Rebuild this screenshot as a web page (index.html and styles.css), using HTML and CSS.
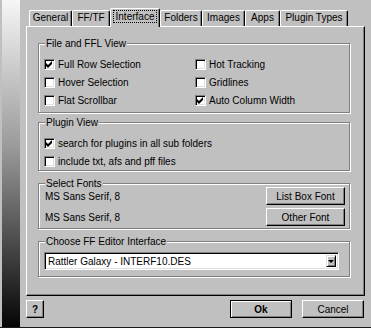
FILE: index.html
```html
<!DOCTYPE html>
<html lang="en">
  <head>
    <meta charset="UTF-8" />
    <title>Options - Interface</title>
    <link rel="stylesheet" href="styles.css">
  </head>
  <body>
    <div class="dialog">
      <div class="strip"></div>
      <div class="main">
        <!-- tab strip -->
        <div class="tabs">
          <div class="tab t-general">General</div>
          <div class="tab t-fftf">FF/TF</div>
          <div class="tab active t-interface"><span class="focus">Interface</span></div>
          <div class="tab t-folders">Folders</div>
          <div class="tab t-images">Images</div>
          <div class="tab t-apps">Apps</div>
          <div class="tab t-plugins">Plugin Types</div>
        </div>

        <div class="panel">
          <!-- File and FFL View -->
          <fieldset class="group g-view">
            <legend>File and FFL View</legend>
            <div class="checks two-col">
              <label class="check"><span class="box"><svg viewBox="0 0 7 7"><polygon points="0,2 2,4 6,0 6,3 2,7 0,5" /></svg></span>Full Row Selection</label>
              <label class="check"><span class="box"></span>Hot Tracking</label>
              <label class="check"><span class="box"></span>Hover Selection</label>
              <label class="check"><span class="box"></span>Gridlines</label>
              <label class="check"><span class="box"></span>Flat Scrollbar</label>
              <label class="check"><span class="box"><svg viewBox="0 0 7 7"><polygon points="0,2 2,4 6,0 6,3 2,7 0,5" /></svg></span>Auto Column Width</label>
            </div>
          </fieldset>

          <!-- Plugin View -->
          <fieldset class="group g-plugin">
            <legend>Plugin View</legend>
            <div class="checks">
              <label class="check"><span class="box"><svg viewBox="0 0 7 7"><polygon points="0,2 2,4 6,0 6,3 2,7 0,5" /></svg></span>search for plugins in all sub folders</label>
              <label class="check"><span class="box"></span>include txt, afs and pff files</label>
            </div>
          </fieldset>

          <!-- Select Fonts -->
          <fieldset class="group g-fonts">
            <legend>Select Fonts</legend>
            <div class="font-row">
              <span>MS Sans Serif, 8</span>
              <button class="btn font-btn">List Box Font</button>
            </div>
            <div class="font-row">
              <span>MS Sans Serif, 8</span>
              <button class="btn font-btn">Other Font</button>
            </div>
          </fieldset>

          <!-- Choose FF Editor Interface -->
          <fieldset class="group g-editor">
            <legend>Choose FF Editor Interface</legend>
            <div class="select">
              <span class="select-text">Rattler Galaxy - INTERF10.DES</span>
              <span class="select-arrow"><span class="tri"></span></span>
            </div>
          </fieldset>
        </div>

        <div class="footer">
          <button class="btn help-btn">?</button>
          <button class="btn default-btn ok-btn">Ok</button>
          <button class="btn cancel-btn">Cancel</button>
        </div>
      </div>
    </div>
  </body>
</html>
```

FILE: styles.css
```css
body {
  margin: 0;
  background: #c0c0c0;
  font-family: "Liberation Sans", Arial, sans-serif;
  font-size: 10px;
  color: #000;
}

.dialog {
  display: flex;
  width: 371px;
  height: 328px;
  box-sizing: border-box;
  border-bottom: 1px solid #1a1a1a;
  overflow: hidden;
}

.strip {
  width: 18px;
  margin-left: 2px;
  background: linear-gradient(#f6f6f6, #9a9a9a 45%, #050505);
}

.main {
  width: 339px;
  margin-left: 6px;
  display: flex;
  flex-direction: column;
}

/* tabs */
.tabs {
  display: flex;
  align-items: flex-end;
  height: 18px;
  margin-top: 8px;
  padding-left: 3px;
  position: relative;
  z-index: 1;
}

.tab {
  box-sizing: border-box;
  height: 16px;
  border: 1px solid;
  border-color: #fff #000 transparent #fff;
  border-bottom: none;
  border-radius: 2px 2px 0 0;
  box-shadow: inset -1px 0 #808080;
  text-align: center;
  line-height: 13px;
  white-space: nowrap;
}

.tab.active {
  height: 19px;
  margin-bottom: -1px;
  background: #c0c0c0;
  line-height: 12px;
  padding-top: 2px;
}

.focus {
  outline: 1px dotted #000;
  outline-offset: 0;
  padding: 0 2px;
}

.t-general { width: 43px; }
.t-fftf { width: 38px; }
.t-interface { width: 50px; }
.t-folders { width: 42px; }
.t-images { width: 43px; }
.t-apps { width: 35px; }
.t-plugins { width: 68px; }

/* panel */
.panel {
  height: 270px;
  box-sizing: border-box;
  border: 1px solid;
  border-color: #fff #000 #000 #fff;
  box-shadow: inset -1px -1px #808080;
  padding: 10px 0 0 11px;
}

.group {
  width: 312px;
  box-sizing: border-box;
  margin: 0;
  padding: 0 0 0 5px;
  border: 1px solid #808080;
  box-shadow: inset 1px 1px #fff, 1px 1px #fff;
  min-width: 0;
}

.group legend {
  margin-left: 1px;
  padding: 0 1px;
  line-height: 13px;
  background: #c0c0c0;
}

.g-view { padding-top: 5px; padding-bottom: 3px; }
.g-plugin { margin-top: 3px; padding-top: 5px; padding-bottom: 0; }
.g-fonts { margin-top: 6px; padding-bottom: 2px; }
.g-editor { margin-top: 6px; padding-top: 4px; padding-bottom: 6px; }

.checks {
  display: grid;
  grid-auto-rows: 18px;
}

.two-col {
  grid-template-columns: 151px 1fr;
}

.check {
  display: flex;
  align-items: center;
  gap: 3px;
  white-space: nowrap;
}

.box {
  width: 11px;
  height: 11px;
  box-sizing: border-box;
  border: 1px solid;
  border-color: #808080 #fff #fff #808080;
  box-shadow: inset 1px 1px #000, inset -1px -1px #dfdfdf;
  background: #fff;
  display: flex;
  align-items: center;
  justify-content: center;
}

.box svg {
  width: 7px;
  height: 7px;
  fill: #000;
}

/* fonts group */
.font-row {
  display: flex;
  justify-content: space-between;
  align-items: center;
  height: 18px;
  padding: 0 4px 0 1px;
}

.font-row:first-of-type {
  margin-top: -3px;
}

.font-row + .font-row {
  margin-top: 3px;
}

/* buttons */
.btn {
  font-family: inherit;
  font-size: 10px;
  color: #000;
  background: #c0c0c0;
  box-sizing: border-box;
  height: 18px;
  padding: 0;
  border: 1px solid;
  border-color: #fff #000 #000 #fff;
  box-shadow: inset -1px -1px #808080;
}

.font-btn { width: 79px; }

.default-btn {
  border-color: #000;
  box-shadow: inset 1px 1px #fff, inset -1px -1px #808080;
}

/* combo box */
.select {
  width: 295px;
  height: 18px;
  box-sizing: border-box;
  display: flex;
  align-items: center;
  justify-content: space-between;
  padding: 2px;
  border: 1px solid;
  border-color: #808080 #fff #fff #808080;
  box-shadow: inset 1px 1px #000, inset -1px -1px #dfdfdf;
  background: #fff;
}

.select-text {
  padding-left: 1px;
}

.select-arrow {
  width: 10px;
  height: 12px;
  box-sizing: border-box;
  border: 1px solid;
  border-color: #dfdfdf #000 #000 #dfdfdf;
  box-shadow: inset 1px 1px #fff, inset -1px -1px #808080;
  background: #c0c0c0;
  display: flex;
  align-items: center;
  justify-content: center;
}

.tri {
  width: 0;
  height: 0;
  border-left: 3px solid transparent;
  border-right: 3px solid transparent;
  border-top: 3px solid #000;
}

/* footer */
.footer {
  display: flex;
  margin-top: 4px;
  padding-right: 1px;
}

.help-btn {
  width: 18px;
  font-weight: bold;
}

.ok-btn {
  width: 62px;
  margin-left: auto;
  font-weight: bold;
}

.cancel-btn {
  width: 62px;
  margin-left: 10px;
}
```
